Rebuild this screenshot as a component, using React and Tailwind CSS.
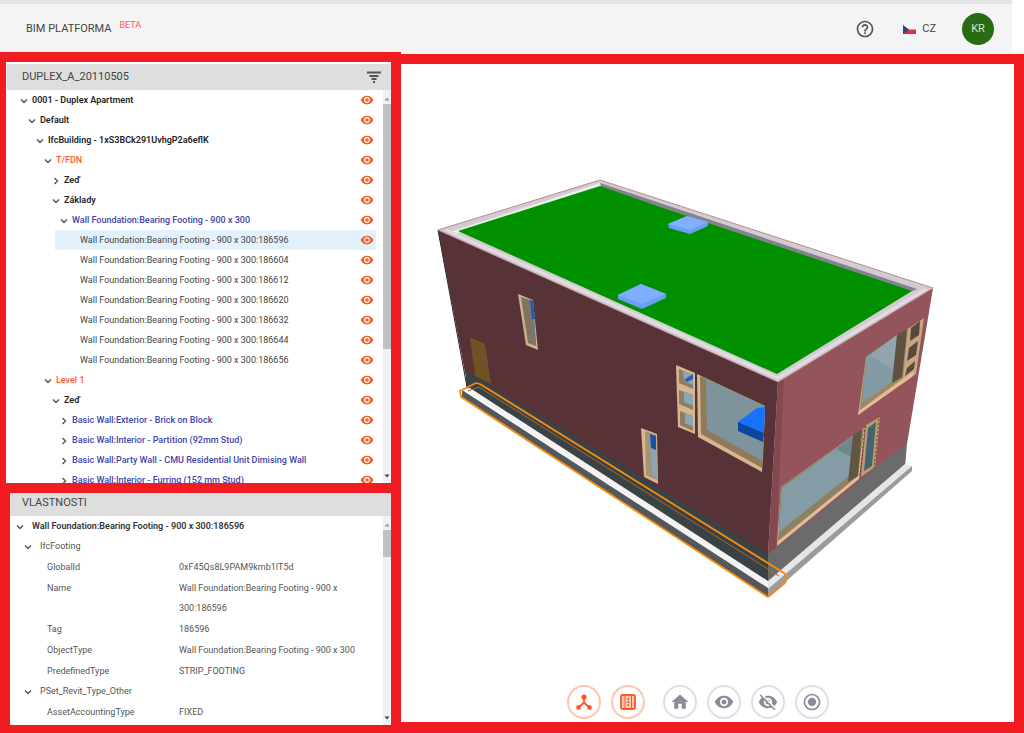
import React, { useState } from 'react';
import { MdHelpOutline, MdHome, MdRadioButtonChecked, MdVisibility, MdVisibilityOff } from 'react-icons/md';

const INDENT = ['ml-0', 'ml-2', 'ml-4', 'ml-6', 'ml-8', 'ml-10', 'ml-12'];

const TONES = {
  root: 'font-semibold text-[#222]',
  level: 'font-medium text-[#ff5a36]',
  type: 'font-medium text-[#4244a8]',
  leaf: 'text-[#444]',
};

const footing = 'Wall Foundation:Bearing Footing - 900 x 300';

const treeItems = [
  { depth: 0, label: '0001 - Duplex Apartment', tone: 'root', open: true },
  { depth: 1, label: 'Default', tone: 'root', open: true },
  { depth: 2, label: 'IfcBuilding - 1xS3BCk291UvhgP2a6eflK', tone: 'root', open: true },
  { depth: 3, label: 'T/FDN', tone: 'level', open: true },
  { depth: 4, label: 'Zeď', tone: 'root', open: false },
  { depth: 4, label: 'Základy', tone: 'root', open: true },
  { depth: 5, label: footing, tone: 'type', open: true },
  { depth: 6, label: `${footing}:186596`, tone: 'leaf' },
  { depth: 6, label: `${footing}:186604`, tone: 'leaf' },
  { depth: 6, label: `${footing}:186612`, tone: 'leaf' },
  { depth: 6, label: `${footing}:186620`, tone: 'leaf' },
  { depth: 6, label: `${footing}:186632`, tone: 'leaf' },
  { depth: 6, label: `${footing}:186644`, tone: 'leaf' },
  { depth: 6, label: `${footing}:186656`, tone: 'leaf' },
  { depth: 3, label: 'Level 1', tone: 'level', open: true },
  { depth: 4, label: 'Zeď', tone: 'root', open: true },
  { depth: 5, label: 'Basic Wall:Exterior - Brick on Block', tone: 'type', open: false },
  { depth: 5, label: 'Basic Wall:Interior - Partition (92mm Stud)', tone: 'type', open: false },
  { depth: 5, label: 'Basic Wall:Party Wall - CMU Residential Unit Dimising Wall', tone: 'type', open: false },
  { depth: 5, label: 'Basic Wall:Interior - Furring (152 mm Stud)', tone: 'type', open: false },
];

const propertySets = [
  {
    name: 'IfcFooting',
    rows: [
      ['GlobalId', '0xF45Qs8L9PAM9kmb1lT5d'],
      ['Name', `${footing}:186596`],
      ['Tag', '186596'],
      ['ObjectType', footing],
      ['PredefinedType', 'STRIP_FOOTING'],
    ],
  },
  { name: 'PSet_Revit_Type_Other', rows: [['AssetAccountingType', 'FIXED']] },
];

const Chevron = ({ open }) => (
  <svg viewBox="0 0 8 8" className="w-2 h-2 mt-0.5" fill="none" stroke="#555" strokeWidth="1.4">
    {open ? <path d="M1 2.5 L4 5.5 L7 2.5" /> : <path d="M2.5 1 L5.5 4 L2.5 7" />}
  </svg>
);

const Arrow = ({ down }) => (
  <svg viewBox="0 0 8 6" className="w-2 h-1.5 shrink-0" fill={down ? '#444' : '#999'}>
    <path d={down ? 'M1.5 1.5 H6.5 L4 4.5 Z' : 'M1.5 4.5 H6.5 L4 1.5 Z'} />
  </svg>
);

const Scrollbar = ({ thumb }) => (
  <div className="w-2 shrink-0 bg-[#f1f1f1] flex flex-col justify-between pt-1.5 pb-1" aria-hidden="true">
    <Arrow />
    <div className="flex-1 pt-0.5">
      <div className={`bg-[#c1c1c1] ${thumb}`} />
    </div>
    <Arrow down />
  </div>
);

const FilterIcon = () => (
  <svg viewBox="0 0 16 12" className="w-4 h-3" stroke="#555" strokeWidth="2">
    <path d="M1 1.5 H15 M3.5 5 H12.5 M5.5 8 H10.5 M7 11 H9" />
  </svg>
);

const Header = () => (
  <header className="h-13 shrink-0 mr-3 border-t-4 border-[#e4e4e4] bg-[#f4f4f4] flex items-center justify-between pl-[26px] pr-[18px] pt-0.5">
    <h1 className="text-[11px] text-[#444] flex items-start gap-2">
      BIM PLATFORMA
      <span className="text-[9px] leading-2 text-[#ff5a43]">BETA</span>
    </h1>
    <div className="flex items-center">
      <button type="button" aria-label="Nápověda" className="text-[#555] mr-7">
        <MdHelpOutline size={20} />
      </button>
      <button type="button" className="flex items-center gap-1.5 text-[11px] text-[#444] mr-[26px]">
        <svg viewBox="0 0 13 9" className="w-[13px] h-[9px]">
          <rect width="13" height="4.5" fill="#f7f7f7" />
          <rect y="4.5" width="13" height="4.5" fill="#e0303c" />
          <path d="M0 0 L6 4.5 L0 9 Z" fill="#27457f" />
        </svg>
        CZ
      </button>
      <button type="button" className="w-8 h-8 rounded-full bg-[#276c12] text-[#d5e5d0] text-[11px]">
        KR
      </button>
    </div>
  </header>
);

const TreePanel = () => {
  const [selected, setSelected] = useState(7);

  return (
    <section className="ml-1.5 pt-0.5 pl-px bg-white flex-[420_1_0px] min-h-0 flex flex-col">
      <div className="h-[26px] shrink-0 bg-[#dedede] flex items-center justify-between pl-[15px] pr-[9px]">
        <h2 className="text-[11px] text-[#444]">DUPLEX_A_20110505</h2>
        <button type="button" aria-label="Filtr">
          <FilterIcon />
        </button>
      </div>
      <div className="flex-1 min-h-0 flex">
        <ul className="flex-1 min-w-0 overflow-hidden pr-[7px]">
          {treeItems.map((item, i) => (
            <li
              key={i}
              className={`h-5 flex items-center pl-[13px] pr-0.5 ${INDENT[item.depth]} ${i === selected ? 'bg-[#e3f1fd]' : ''}`}
            >
              {item.tone === 'leaf' ? (
                <span className="w-2" />
              ) : (
                <button type="button" aria-label={item.open ? 'Sbalit' : 'Rozbalit'}>
                  <Chevron open={item.open} />
                </button>
              )}
              <button
                type="button"
                onClick={() => setSelected(i)}
                className={`flex-1 min-w-0 ml-1 text-left whitespace-nowrap text-[9px] leading-5 ${TONES[item.tone]}`}
              >
                {item.label}
              </button>
              <button type="button" aria-label="Viditelnost" className="text-[#f2622e]">
                <MdVisibility size={14} />
              </button>
            </li>
          ))}
        </ul>
        <Scrollbar thumb="h-[245px]" />
      </div>
    </section>
  );
};

const PropertiesPanel = () => (
  <section className="ml-2.5 bg-white flex-[233_1_0px] min-h-0 flex flex-col text-[9px] leading-5 text-[#555]">
    <h2 className="h-[23px] shrink-0 bg-[#dedede] pl-3 text-[11px] leading-5 text-[#444]">VLASTNOSTI</h2>
    <div className="flex-1 min-h-0 flex">
      <div className="flex-1 min-w-0 overflow-hidden">
        <h3 className="flex items-center gap-2 pl-1.5 font-semibold text-[#333]">
          <Chevron open />
          {footing}:186596
        </h3>
        {propertySets.map((set) => (
          <div key={set.name}>
            <h4 className="flex items-center gap-2 pl-3.5">
              <Chevron open />
              {set.name}
            </h4>
            <table className="w-full table-fixed">
              <tbody>
                {set.rows.map(([name, value]) => (
                  <tr key={name}>
                    <th scope="row" className="w-[169px] pl-[37px] pt-px text-left align-top font-normal">{name}</th>
                    <td className="pt-px pr-4 align-top">{value}</td>
                  </tr>
                ))}
              </tbody>
            </table>
          </div>
        ))}
      </div>
      <Scrollbar thumb="h-[27px]" />
    </div>
  </section>
);

const Building = () => (
  <svg viewBox="401 64 613 610" className="flex-1 min-h-0 w-full" role="img" aria-label="3D model">
    {/* walls */}
    <path d="M438 230 L778 382 L768 556 L465 373 Z" fill="#573337" />
    <path d="M778 382 L933 288 L907 444 L768 556 Z" fill="#93555b" />
    <path d="M778 382 L784 379 L776 549 L768 556 Z" fill="#84494f" />
    {/* plinth */}
    <path d="M465 370 L768 554 V583 L467 389 Z" fill="#3b4245" />
    <path d="M768 554 L907 443 L905 468 L768 583 Z" fill="#6b6b6b" />
    <path d="M438 230 L467 387" stroke="#33262a" strokeWidth="1" />
    {/* roof and parapet */}
    <path d="M438 230 L600 180 L933 288 L778 382 Z" fill="#d2cbd0" stroke="#b98a92" strokeWidth="1" />
    <path d="M450 232 L600 183 L600 188 L458 233 Z" fill="#eceeec" />
    <path d="M600 183 L917 289 L910 292 L602 188 Z" fill="#83838a" />
    <path d="M458 231 L600 186 L660 207 L912 291 L777 374 Z" fill="#009000" />
    <path d="M446 230 L778 378 L926 289" fill="none" stroke="#e0dce2" strokeWidth="3" />
    {/* skylights */}
    <path d="M668 224 L687 216 L708 222 V226 L690 234 L669 228 Z" fill="#6a9ff2" />
    <path d="M668 224 L687 216 L708 222 L690 230 Z" fill="#80b0ff" />
    <path d="M618 295 L641 284 L666 294 V298 L642 309 L618 299 Z" fill="#6a9ff2" />
    <path d="M618 295 L641 284 L666 294 L642 304 Z" fill="#80aeff" />
    {/* door */}
    <path d="M470 337 L485 344 L491 384 L475 376 Z" fill="#6f5226" />
    {/* narrow windows */}
    <path d="M518 294 L533 300 L538 350 L526 345 Z" fill="#cfb18e" />
    <path d="M521 297 L533 301 L536 346 L528 343 Z" fill="#81745d" />
    <path d="M529 299 L533 301 L536 345 L533 343 Z" fill="#6e7a7c" />
    <path d="M530 300 L533 301 L535 319 L532 319 Z" fill="#2458ae" />
    <path d="M641 428 L657 434 L658 484 L644 477 Z" fill="#d5b691" />
    <path d="M645 431 L656 435 L657 480 L646 475 Z" fill="#a39476" />
    <path d="M650 434 L656 436 L657 478 L652 475 Z" fill="#8da5b0" />
    <path d="M650 434 L656 436 L656 450 L651 448 Z" fill="#1653a5" />
    {/* three-pane strip */}
    <path d="M676 365 L695 373 L695 434 L678 427 Z" fill="#d5b691" />
    <path d="M679 369 L693 375 V389 L679 383 Z M679 390 L693 395 V410 L679 404 Z M680 411 L693 416 V431 L680 425 Z" fill="#8d7d61" />
    <path d="M683 371 L693 375 V385 L684 381 Z M684 392 L693 395 V406 L684 402 Z M685 413 L693 416 V427 L685 423 Z" fill="#8da5b0" />
    <path d="M684 380 L693 374 V379 L687 382 Z" fill="#285ec0" />
    {/* large window, long side */}
    <path d="M697 374 L765 406 L762 472 L698 437 Z" fill="#d5b691" />
    <path d="M700 376 L765 406 L762 468 L701 434 Z" fill="#8f7b5a" />
    <path d="M706 379 L765 406 L763 461 L707 430 Z" fill="#7f939c" />
    <path d="M738 422 L757 408 L765 407 L764 433 Z" fill="#1872ff" />
    <path d="M738 422 L764 433 L763 442 L738 431 Z" fill="#0c469e" />
    {/* upper window, short side */}
    <path d="M866 357 L924 318 L916 374 L858 415 Z" fill="#c9a681" />
    <path d="M866 357 L908 328 L903 378 L860 410 Z" fill="#9a8764" />
    <path d="M858 415 L859 411 L914 371 L913 376 Z" fill="#e2bd96" />
    <path d="M866 357 L897 335 L893 381 L862 403 Z" fill="#849ba5" />
    <path d="M870 355 L897 335 L894 370 Z" fill="#92a5ae" />
    <path d="M897 335 L907 329 L902 377 L892 383 Z" fill="#5e5240" />
    <path d="M911 328 L920 321 L919 335 L910 341 Z M909 348 L918 341 L916 355 L907 361 Z M907 368 L915 361 L914 369 L905 376 Z" fill="#574a3c" />
    {/* lower window, short side */}
    <path d="M781 487 L865 427 L859 479 L777 546 Z" fill="#e2bd96" />
    <path d="M781 487 L864 428 L858 476 L778 541 Z" fill="#8f8062" />
    <path d="M782 488 L853 436 L849 476 L779 532 Z" fill="#839ca5" />
    <path d="M836 449 L853 436 L851 457 Z" fill="#71858d" />
    <path d="M853 435 L862 429 L858 476 L848 482 Z" fill="#61563f" />
    <path d="M866 425 L880 417 L875 467 L861 477 Z" fill="#bd9b71" />
    <path d="M868 428 L876 422 L872 466 L864 471 Z" fill="#426570" />
    <path d="M865 426 L860 477 M879 419 L874 468" stroke="#6b5038" strokeWidth="1" strokeDasharray="2 2" />
    {/* strip footing */}
    <path d="M768 581 L905 464 L912 466 L768 590 Z" fill="#e6e6e8" />
    <path d="M768 589 L912 466 V471 L768 597 Z" fill="#9b9b9e" />
    <path d="M463 389 L470 388 L768 581 V589 Z" fill="#f5f2f4" />
    <path d="M462 390 L768 588 V597 L462 397 Z" fill="#55585a" />
    {/* selection outline */}
    <g fill="none" stroke="#f78a10" strokeLinejoin="round">
      <path d="M460 391 L476 383 L480 384 L784 573 L787 577 L785 583 L768 597 L461 397 Z" strokeWidth="1.8" />
      <path d="M468 391 L479 387 L768 569 L779 576" stroke="#a66a28" strokeWidth="1" />
    </g>
  </svg>
);

const NodesIcon = () => (
  <svg viewBox="0 0 18 18" className="w-[18px] h-[18px]" fill="currentColor">
    <path d="M9 4 V10 M9 9.5 L4 14 M9 9.5 L14 14" stroke="currentColor" strokeWidth="1.8" />
    <circle cx="9" cy="4" r="2.6" />
    <circle cx="3.6" cy="14.4" r="2.4" />
    <circle cx="14.4" cy="14.4" r="2.4" />
  </svg>
);

const PropertiesIcon = () => (
  <svg viewBox="0 0 18 18" className="w-[18px] h-[18px]" fill="none" stroke="currentColor">
    <rect x="2" y="2" width="14" height="14" rx="1.5" fill="#ffc9b8" strokeWidth="1.8" />
    <path d="M6 3 V15 M12.5 3 V15" strokeWidth="1" />
    <path d="M8.4 5.8 H10.2 M8.4 9 H10.2 M8.4 12.2 H10.2" strokeWidth="1.8" />
  </svg>
);

const ToolButton = ({ label, active, children }) => (
  <button
    type="button"
    aria-label={label}
    className={`w-[34px] h-[34px] rounded-full border-2 bg-white flex items-center justify-center ${
      active ? 'border-[#ffc4b2] text-[#ff5722]' : 'border-[#dfdfe4] text-[#8b8b99]'
    }`}
  >
    {children}
  </button>
);

const Viewer = () => (
  <main className="flex-1 min-w-0 border-t-2 border-[#f4f4f4] flex">
    <div className="flex-1 min-w-0 bg-[#f01c22] pt-2.5 pr-2.5 pb-[11px] flex">
      <div className="flex-1 min-w-0 bg-white flex flex-col">
        <Building />
        <div className="h-12 shrink-0 flex items-end justify-center gap-[18px] pb-[3px] pr-5">
          <div className="flex gap-2.5">
            <ToolButton label="Strom" active><NodesIcon /></ToolButton>
            <ToolButton label="Vlastnosti" active><PropertiesIcon /></ToolButton>
          </div>
          <div className="flex gap-2.5">
            <ToolButton label="Domů"><MdHome size={20} /></ToolButton>
            <ToolButton label="Zobrazit"><MdVisibility size={20} /></ToolButton>
            <ToolButton label="Skrýt"><MdVisibilityOff size={20} /></ToolButton>
            <ToolButton label="Zaměřit"><MdRadioButtonChecked size={20} /></ToolButton>
          </div>
        </div>
      </div>
    </div>
  </main>
);

const App = () => {
  return (
    <div className="h-screen flex flex-col bg-white font-[Roboto,sans-serif]">
      <Header />
      <div className="flex-1 min-h-0 flex">
        <aside className="w-[401px] shrink-0 bg-[#f01c22] pt-2.5 pr-2.5 pb-2 flex flex-col gap-2.5">
          <TreePanel />
          <PropertiesPanel />
        </aside>
        <Viewer />
      </div>
    </div>
  );
};

export default App;
